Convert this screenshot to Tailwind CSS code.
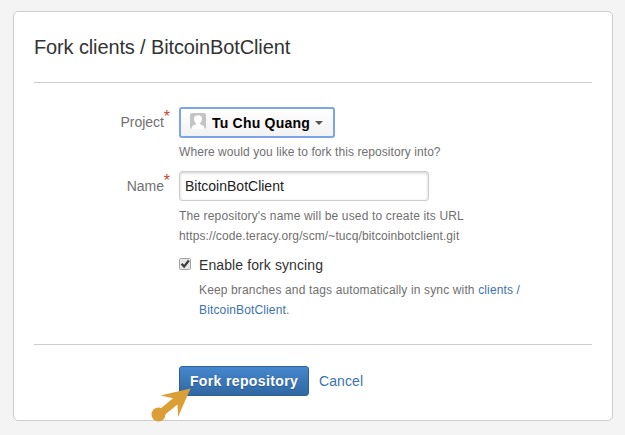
<!DOCTYPE html>
<html lang="en">
<head>
<meta charset="utf-8">
<title>Fork repository</title>
<script src="https://cdn.jsdelivr.net/npm/@tailwindcss/browser@4"></script>
</head>
<body class="h-[435px] overflow-hidden bg-[#f4f4f4] pt-[11px] pl-[13px] font-['Liberation_Sans',Arial,sans-serif] text-[14px] leading-5 text-[#333]">
<main class="relative h-[410px] w-[600px] rounded-[5px] border border-[#ccc] bg-white px-5">
  <h1 class="h-[71px] border-b border-[#ccc] pt-[20px] text-[20px] leading-[30px] tracking-[-0.13px] whitespace-nowrap">Fork clients / BitcoinBotClient</h1>
  <form class="flex h-[262px] flex-col border-b border-[#ccc] pt-[24px]">
    <div class="flex h-[64px]">
      <label class="relative w-[145px] shrink-0 pt-[5px] pr-[15px] text-right text-[#707070]">Project<span class="absolute top-0 right-[9px] text-[16px] text-[#d04437]">*</span></label>
      <div>
        <button type="button" class="flex h-[31px] w-[156px] items-center rounded-[3px] border-2 border-[#7ba5e8] bg-linear-to-b from-white to-[#f2f2f2] pl-[9px] font-bold text-black">
          <svg class="mt-[-4px] mr-[6px] shrink-0" width="16" height="16" viewBox="0 0 16 16"><rect width="16" height="16" rx="2" fill="#c4c4c4"/><path d="M8 2.2c-2.600 0-4.100 1.600-4 3.900.1 2 .8 3.300 1.900 4.200v1L2.300 13 1.300 16h13.400l-1-3-3.600-1.700v-1c1.100-.9 1.800-2.200 1.900-4.200.1-2.300-1.400-3.900-4-3.900z" fill="#fff"/></svg>
          <span class="tracking-[0.22px] whitespace-nowrap">Tu Chu Quang</span>
          <svg class="ml-[5px] shrink-0" width="8" height="4" viewBox="0 0 8 4"><path d="M0 0h8L4 4z" fill="#555"/></svg>
        </button>
        <p class="mt-[4px] text-[12px] tracking-[0.07px] whitespace-nowrap text-[#707070]">Where would you like to fork this repository into?</p>
      </div>
    </div>
    <div class="flex h-[84px]">
      <label class="relative w-[145px] shrink-0 pt-[5px] pr-[15px] text-right text-[#707070]">Name<span class="absolute top-0 right-[9px] text-[16px] text-[#d04437]">*</span></label>
      <div>
        <input type="text" value="BitcoinBotClient" class="block h-[30px] w-[250px] rounded-[3px] border border-[#ccc] bg-white px-[5px] text-[14px] text-[#222] shadow-[inset_0_1px_3px_#ccc]">
        <p class="mt-[5px] text-[12px] whitespace-nowrap text-[#707070]"><span class="tracking-[0.15px]">The repository's name will be used to create its URL</span><br><span class="tracking-[0.1px]">https://code.teracy.org/scm/~tucq/bitcoinbotclient.git</span></p>
      </div>
    </div>
    <div class="ml-[145px] flex">
      <svg class="mt-[3px] mr-[8px] shrink-0" width="12" height="12" viewBox="0 0 12 12"><rect x=".5" y=".5" width="11" height="11" rx="1" fill="#e6e6e6" stroke="#a5a5a5"/><path d="M2.600 5.800l2.500 2.800L9.800 2.500" fill="none" stroke="#3a3a3a" stroke-width="2.200"/></svg>
      <div class="whitespace-nowrap">
        <div class="tracking-[0.1px]">Enable fork syncing</div>
        <p class="mt-[5px] text-[12px] tracking-[0.14px] text-[#707070]">Keep branches and tags automatically in sync with <a class="text-[#3b73af]">clients /<br>BitcoinBotClient</a>.</p>
      </div>
    </div>
  </form>
  <div class="ml-[145px] flex pt-[21px]">
    <button type="button" class="h-[30px] w-[130px] rounded-[3px] border border-[#2e5f97] bg-linear-to-b from-[#4687ce] to-[#3068a2] text-center font-bold tracking-[0.37px] whitespace-nowrap text-white [text-shadow:0_1px_0_#2a5788]">Fork repository</button>
    <a class="ml-[10px] pt-[5px] tracking-[0.1px] text-[#3b73af]">Cancel</a>
  </div>
  <svg class="absolute top-[374px] left-[136px]" width="44" height="38" viewBox="150 386 44 38"><g fill="#dc9e36"><circle cx="158.500" cy="414.500" r="7"/><path d="M160 409L173 398.200 160.500 395.500 190.500 388.500 178 417 177.500 404.500 164.500 415z"/></g></svg>
</main>
</body>
</html>
